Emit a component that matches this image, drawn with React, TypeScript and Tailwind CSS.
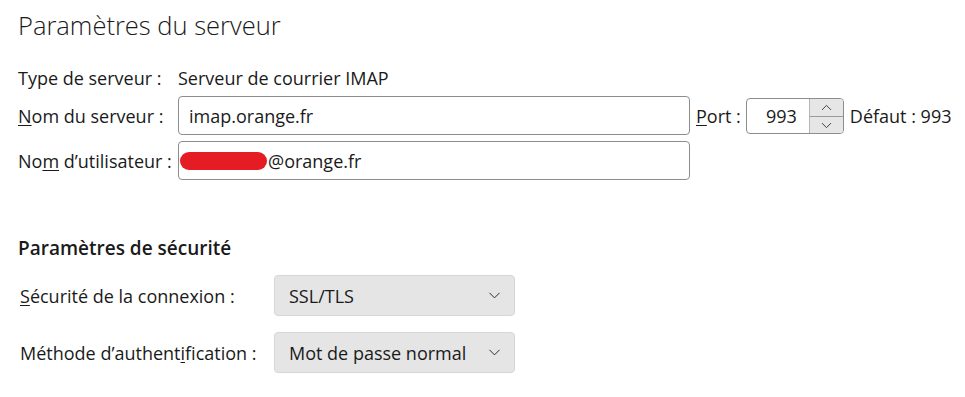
import { ChevronDown, ChevronUp } from "lucide-react";

const font = { fontFamily: '"Open Sans", "Noto Sans", sans-serif' };

function Field({ children, className = "" }: { children: React.ReactNode; className?: string }) {
  return (
    <div className={`flex h-[39px] shrink-0 items-center rounded-[4px] border border-[#8d8d8d] bg-white ${className}`}>
      {children}
    </div>
  );
}

function Dropdown({ value }: { value: string }) {
  return (
    <div className="flex h-[41px] w-[241px] shrink-0 items-center justify-between rounded-[4px] border border-[#d6d6d6] bg-[#e5e5e5] pl-[14px] pr-[10px]">
      <span>{value}</span>
      <ChevronDown size={19} strokeWidth={1.2} className="text-[#222]" />
    </div>
  );
}

export default function App() {
  return (
    <div className="h-[397px] w-[965px] bg-white text-[18px] leading-[24px] text-[#1a1a1a]" style={font}>
      <div className="pl-[18px] pt-[6px]">
        <h1 className="text-[25.5px] font-light leading-[38px] text-[#1a1a1a]">Paramètres du serveur</h1>

        <div className="mt-[22px] flex h-[24px] items-center whitespace-nowrap">
          <span className="w-[160px] shrink-0">Type de serveur :</span>
          <span>Serveur de courrier IMAP</span>
        </div>

        <div className="mt-[6px] flex items-center whitespace-nowrap">
          <span className="w-[160px] shrink-0">
            <u className="underline-offset-2">N</u>om du serveur :
          </span>
          <Field className="w-[512px] px-[10px]">imap.orange.fr</Field>
          <span className="ml-[6px] shrink-0">
            <u className="underline-offset-2">P</u>ort :
          </span>
          <div className="ml-[5px] flex h-[36px] w-[98px] shrink-0 items-stretch overflow-hidden rounded-[4px] border border-[#8d8d8d]">
            <div className="flex flex-1 items-center justify-end pr-[12px]">993</div>
            <div className="flex w-[34px] flex-col border-l border-[#b5b5b5] bg-[#e6e6e6]">
              <div className="flex flex-1 items-center justify-center border-b border-[#9a9a9a]">
                <ChevronUp size={17} strokeWidth={1.3} className="text-[#333]" />
              </div>
              <div className="flex flex-1 items-center justify-center">
                <ChevronDown size={17} strokeWidth={1.3} className="text-[#333]" />
              </div>
            </div>
          </div>
          <span className="ml-[6px] shrink-0">Défaut : 993</span>
        </div>

        <div className="mt-[6px] flex items-center whitespace-nowrap">
          <span className="w-[160px] shrink-0">
            No<u className="underline-offset-2">m</u> d’utilisateur :
          </span>
          <Field className="w-[512px] pl-[1px]">
            <span className="mr-[1px] inline-block h-[18px] w-[87px] rounded-full bg-[#e51c23]" />
            @orange.fr
          </Field>
        </div>

        <h2 className="mt-[55px] text-[19px] font-semibold leading-[26px]">Paramètres de sécurité</h2>

        <div className="mt-[14px] flex items-center whitespace-nowrap pl-[2px]">
          <span className="w-[254px] shrink-0">
            <u className="underline-offset-2">S</u>écurité de la connexion :
          </span>
          <Dropdown value="SSL/TLS" />
        </div>

        <div className="mt-[16px] flex items-center whitespace-nowrap pl-[2px]">
          <span className="w-[254px] shrink-0">
            Méthode d’authent<u className="underline-offset-2">i</u>fication :
          </span>
          <Dropdown value="Mot de passe normal" />
        </div>
      </div>
    </div>
  );
}
